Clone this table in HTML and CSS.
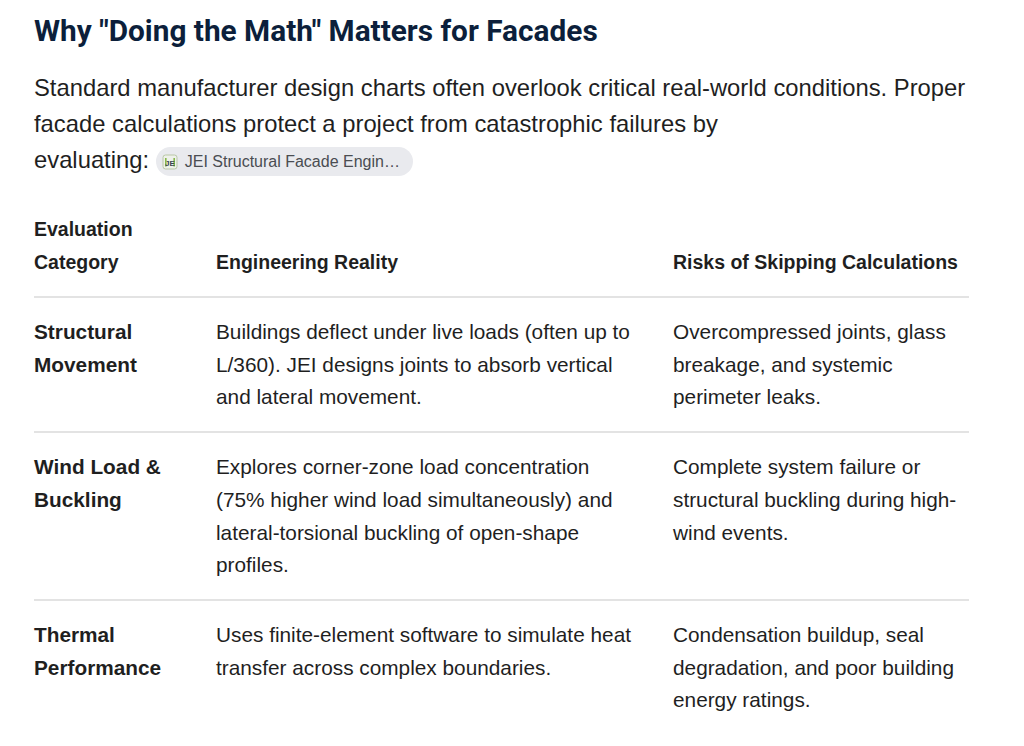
FILE: index.html
```html
<!DOCTYPE html>
<html lang="en">
<head>
<meta charset="utf-8">
<title>Why "Doing the Math" Matters for Facades</title>
<link rel="stylesheet" href="styles.css">
</head>
<body>
<main class="page">
  <h2 class="title">Why "Doing the Math" Matters for Facades</h2>
  <p class="lead">Standard manufacturer design charts often overlook critical real-world conditions. Proper facade calculations protect a project from catastrophic failures by <span class="keep">evaluating: <span class="chip"><svg class="chip-icon" viewBox="0 0 16 16" width="16" height="16" aria-hidden="true"><rect x="1" y="1" width="14" height="14" rx="2.5" fill="#eef1ea" stroke="#b9c7a6"/><rect x="3" y="4" width="1.6" height="8.5" fill="#86b84a"/><rect x="11.4" y="4" width="1.6" height="8.5" fill="#86b84a"/><text x="8" y="11.6" text-anchor="middle" font-family="Liberation Sans, Arial, sans-serif" font-size="8" font-weight="700" fill="#3b4650">JE</text></svg><span class="chip-text">JEI Structural Facade Engin…</span></span></span></p>

  <table class="grid">
    <thead>
      <tr>
        <th class="c1">Evaluation Category</th>
        <th class="c2">Engineering Reality</th>
        <th class="c3">Risks of Skipping Calculations</th>
      </tr>
    </thead>
    <tbody>
      <tr>
        <td class="c1 cat">Structural Movement</td>
        <td class="c2">Buildings deflect under live loads (often up to L/360). JEI designs joints to absorb vertical and lateral movement.</td>
        <td class="c3">Overcompressed joints, glass breakage, and systemic perimeter leaks.</td>
      </tr>
      <tr>
        <td class="c1 cat">Wind Load &amp; Buckling</td>
        <td class="c2">Explores corner-zone load concentration (75% higher wind load simultaneously) and lateral-torsional buckling of open-shape profiles.</td>
        <td class="c3">Complete system failure or structural buckling during high-wind events.</td>
      </tr>
      <tr>
        <td class="c1 cat">Thermal Performance</td>
        <td class="c2">Uses finite-element software to simulate heat transfer across complex boundaries.</td>
        <td class="c3">Condensation buildup, seal degradation, and poor building energy ratings.</td>
      </tr>
    </tbody>
  </table>
</main>
</body>
</html>
```

FILE: styles.css
```css
html, body {
  margin: 0;
  padding: 0;
  background: #ffffff;
}

.page {
  padding: 13px 34px 0 34px;
  font-family: "Liberation Sans", Arial, sans-serif;
  color: #1f1f1f;
}

.title {
  margin: 0;
  font-family: Roboto, "Liberation Sans", Arial, sans-serif;
  font-weight: 700;
  font-size: 29.8px;
  line-height: 36px;
  color: #0c1f3b;
}

.lead {
  margin: 21px 0 0 0;
  font-size: 23.8px;
  line-height: 36px;
  color: #1f1f1f;
  max-width: 940px;
}

.keep {
  white-space: nowrap;
}

.chip {
  display: inline-flex;
  align-items: center;
  gap: 7px;
  height: 29px;
  padding: 0 13px 0 6px;
  border-radius: 15px;
  background: #e9eaee;
  vertical-align: middle;
  white-space: nowrap;
}

.chip-icon {
  display: block;
  flex: none;
}

.chip-text {
  font-size: 16px;
  line-height: 20px;
  color: #4a4d52;
}

.grid {
  margin-top: 17px;
  width: 935px;
  border-collapse: collapse;
  table-layout: fixed;
  font-size: 20.8px;
  line-height: 32.7px;
}

.grid th,
.grid td {
  box-sizing: border-box;
  text-align: left;
  vertical-align: top;
  padding: 18px 16px 17px 0;
  color: #1f1f1f;
}

.grid th {
  font-weight: 700;
  font-size: 19.5px;
  line-height: 33px;
  vertical-align: bottom;
  padding-bottom: 17px;
}

.grid tr {
  border-bottom: 2px solid #e3e3e3;
}

.grid tbody tr:last-child {
  border-bottom: none;
}

.c1 { width: 182px; }
.c2 { width: 457px; padding-right: 36px !important; }
.c3 { width: 296px; padding-right: 8px !important; }

.cat {
  font-weight: 700;
}
```
